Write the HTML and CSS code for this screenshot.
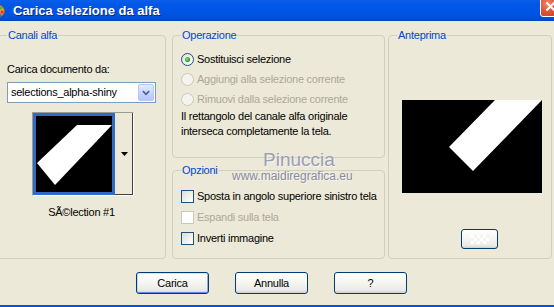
FILE: index.html
```html
<!DOCTYPE html>
<html lang="it">
<head>
    <meta charset="UTF-8">
    <title>Carica selezione da alfa</title>
    <link rel="stylesheet" href="styles.css">
</head>
<body>
    <div class="window">
        <div class="titlebar">
            <svg class="app-icon" viewBox="0 0 16 16">
                <ellipse cx="8" cy="8" rx="7.5" ry="6.5" fill="#F2A23A" stroke="#9A5A12"/>
                <circle cx="12" cy="5" r="1.6" fill="#3FB54A"/>
                <circle cx="13" cy="9" r="1.5" fill="#E0302A"/>
                <circle cx="11" cy="12" r="1.4" fill="#2F6BE0"/>
            </svg>
            <span class="title">Carica selezione da alfa</span>
            <span class="close">
                <svg viewBox="0 0 21 21"><path d="M6 6 L15 15 M15 6 L6 15" stroke="#fff" stroke-width="2.2"/></svg>
            </span>
        </div>

        <div class="panels">
            <fieldset class="group group-source">
                <legend>Canali alfa</legend>
                <div class="field-label">Carica documento da:</div>
                <div class="combo">
                    <span class="combo-text">selections_alpha-shiny</span>
                    <span class="combo-btn">
                        <svg viewBox="0 0 16 17"><path d="M4.5 7 L8 10.5 L11.5 7" fill="none" stroke="#4D6185" stroke-width="2"/></svg>
                    </span>
                </div>
                <div class="thumb-picker">
                    <div class="thumb">
                        <svg viewBox="0 0 76 76"><rect width="76" height="76" fill="#000"/><polygon points="41,9 76,9 19,69 1,47" fill="#fff"/></svg>
                    </div>
                    <div class="thumb-drop">
                        <svg viewBox="0 0 7 4"><polygon points="0,0 7,0 3.5,4" fill="#000"/></svg>
                    </div>
                </div>
                <div class="caption">SÃ©lection #1</div>
            </fieldset>

            <div class="middle">
                <fieldset class="group group-op">
                    <legend>Operazione</legend>
                    <label class="opt"><span class="radio checked"></span>Sostituisci selezione</label>
                    <label class="opt disabled"><span class="radio"></span>Aggiungi alla selezione corrente</label>
                    <label class="opt disabled"><span class="radio"></span>Rimuovi dalla selezione corrente</label>
                    <p class="note">Il rettangolo del canale alfa originale<br>interseca completamente la tela.</p>
                </fieldset>
                <fieldset class="group group-opts">
                    <legend>Opzioni</legend>
                    <label class="opt opt-check"><span class="check"></span>Sposta in angolo superiore sinistro tela</label>
                    <label class="opt opt-check disabled"><span class="check"></span>Espandi sulla tela</label>
                    <label class="opt opt-check"><span class="check"></span>Inverti immagine</label>
                </fieldset>
            </div>

            <fieldset class="group group-preview">
                <legend>Anteprima</legend>
                <div class="preview">
                    <svg viewBox="0 0 140 93"><rect width="140" height="93" fill="#000"/><polygon points="93,0 140,0 71,71 47,47" fill="#fff"/></svg>
                </div>
                <button class="btn btn-small"><span class="checker"></span></button>
            </fieldset>
        </div>

        <div class="actions">
            <button class="btn btn-default">Carica</button>
            <button class="btn">Annulla</button>
            <button class="btn">?</button>
        </div>

        <div class="watermark">
            <div class="wm-name">Pinuccia</div>
            <div class="wm-site">www.maidiregrafica.eu</div>
        </div>
    </div>
</body>
</html>
```

FILE: styles.css
```css
* { margin: 0; padding: 0; box-sizing: border-box; }
html, body { width: 554px; height: 307px; overflow: hidden; }
body { background: #ECE9D8; font-family: "Liberation Sans", Arial, sans-serif; font-size: 11px; line-height: 13px; letter-spacing: -0.25px; color: #000; }

.window { position: relative; height: 307px; display: flex; flex-direction: column; border-bottom: 2px solid #0053E1; overflow: hidden; }

.titlebar { height: 21px; flex: none; display: flex; align-items: center; color: #fff; overflow: hidden; background: linear-gradient(#0A5EEA 0%, #0157E6 20%, #0055E6 60%, #004ED8 90%, #0043BE 100%); }
.app-icon { width: 16px; height: 16px; margin-left: -11px; flex: none; }
.title { margin-left: 8px; font-weight: bold; font-size: 13px; line-height: 21px; letter-spacing: 0; text-shadow: 1px 1px 0 #0A2A8A; }
.close { margin-left: auto; margin-right: -7px; align-self: flex-start; margin-top: -4px; width: 21px; height: 21px; border: 1px solid #fff; border-radius: 3px; background: radial-gradient(circle at 35% 35%, #F08A6A 0%, #E0553A 45%, #C23A1C 100%); flex: none; }
.close svg { display: block; width: 19px; height: 19px; }

.panels { display: flex; margin-top: 8px; flex: none; }
.group { border: 1px solid #D0D0BF; border-radius: 4px; min-width: 0; }
.group legend { color: #0046D5; padding: 0 1px; line-height: 13px; }

.group-source { width: 169px; height: 230px; margin-left: -3px; padding: 21px 9px 0; }
.field-label { height: 13px; }
.combo { margin-top: 6px; height: 21px; border: 1px solid #7F9DB9; background: #fff; display: flex; align-items: center; }
.combo-text { padding-left: 3px; }
.combo-btn { margin-left: auto; margin-right: 1px; width: 16px; height: 17px; border: 1px solid #B4C8F6; border-radius: 2px; background: linear-gradient(#E4ECFE, #C1D3FB 60%, #B2C8F8); }
.combo-btn svg { display: block; width: 14px; height: 15px; }

.thumb-picker { margin: 9px 0 0 25px; width: 102px; display: flex; border-top: 1px solid #9D9D92; border-left: 1px solid #9D9D92; border-bottom: 1px solid #fff; border-right: 1px solid #fff; }
.thumb { width: 82px; height: 82px; border: 3px solid #316AC5; }
.thumb svg { display: block; width: 76px; height: 76px; }
.thumb-drop { width: 18px; display: flex; align-items: center; justify-content: center; background: #ECE9D8; border-right: 1px solid #404040; border-bottom: 1px solid #404040; }
.thumb-drop svg { width: 7px; height: 4px; margin-left: 2px; }
.caption { margin-top: 10px; text-align: center; }

.middle { width: 213px; margin-left: 6px; display: flex; flex-direction: column; gap: 6px; }
.group-op { height: 129px; padding: 7px 0 0 8px; }
.group-opts { height: 95px; padding: 9px 0 0 8px; }

.opt { display: flex; align-items: center; gap: 3px; height: 20px; }
.opt-check { height: 21px; }
.opt.disabled { color: #ACA899; }
.radio { width: 13px; height: 13px; border-radius: 50%; border: 1px solid #1C5180; background: radial-gradient(circle at 65% 65%, #FFFFFF 0%, #F4F4F0 35%, #D8D7D0 100%); display: flex; align-items: center; justify-content: center; flex: none; }
.radio.checked::after { content: ""; width: 5px; height: 5px; border-radius: 50%; background: radial-gradient(circle at 40% 40%, #8BE28B, #21A121 60%, #168816); }
.disabled .radio { border-color: #CAC8BB; background: #F4F3EE; }
.check { width: 13px; height: 13px; border: 1px solid #1C5180; background: linear-gradient(135deg, #DCDCD7 0%, #F2F2EE 60%, #FFFFFF 100%); flex: none; }
.disabled .check { border-color: #CAC8BB; background: #fff; }
.note { line-height: 15px; margin-top: 0; }

.group-preview { width: 164px; height: 230px; margin-left: 3px; padding: 58px 0 0 8px; }
.preview { margin-left: 5px; width: 140px; height: 93px; }
.preview svg { display: block; width: 140px; height: 93px; }
.btn { width: 73px; height: 22px; border: 1px solid #003C74; border-radius: 3px; background: linear-gradient(#FFFFFF 0%, #F7F7F4 40%, #ECEBE6 85%, #D6D0C5 100%); font: inherit; letter-spacing: inherit; color: #000; }
.btn-small { display: flex; align-items: center; justify-content: center; margin: 36px 0 0 64px; width: 37px; height: 20px; }
.checker { width: 18px; height: 9px; background: repeating-conic-gradient(#F2F2F0 0 25%, #FFFFFF 0 50%) 0 0 / 6px 6px; }

.actions { display: flex; gap: 26px; padding-left: 136px; margin-top: 13px; }
.btn-default { box-shadow: inset 0 1px 0 #CEE7FF, inset 1px 0 0 #BCD4F6, inset -1px 0 0 #89ADE4, inset 0 -1px 0 #6982EE; }

.watermark { position: absolute; left: 232px; top: 150px; width: 122px; pointer-events: none; }
.wm-name { margin-left: 31px; font-size: 19px; line-height: 19px; letter-spacing: 0; color: #9C9EB7; text-shadow: 1px 1px 0 rgba(255,255,255,0.6); }
.wm-site { margin-top: 1px; font-size: 12px; line-height: 13px; letter-spacing: 0; color: #8A8CA4; text-shadow: 1px 1px 0 rgba(255,255,255,0.5); }
```
